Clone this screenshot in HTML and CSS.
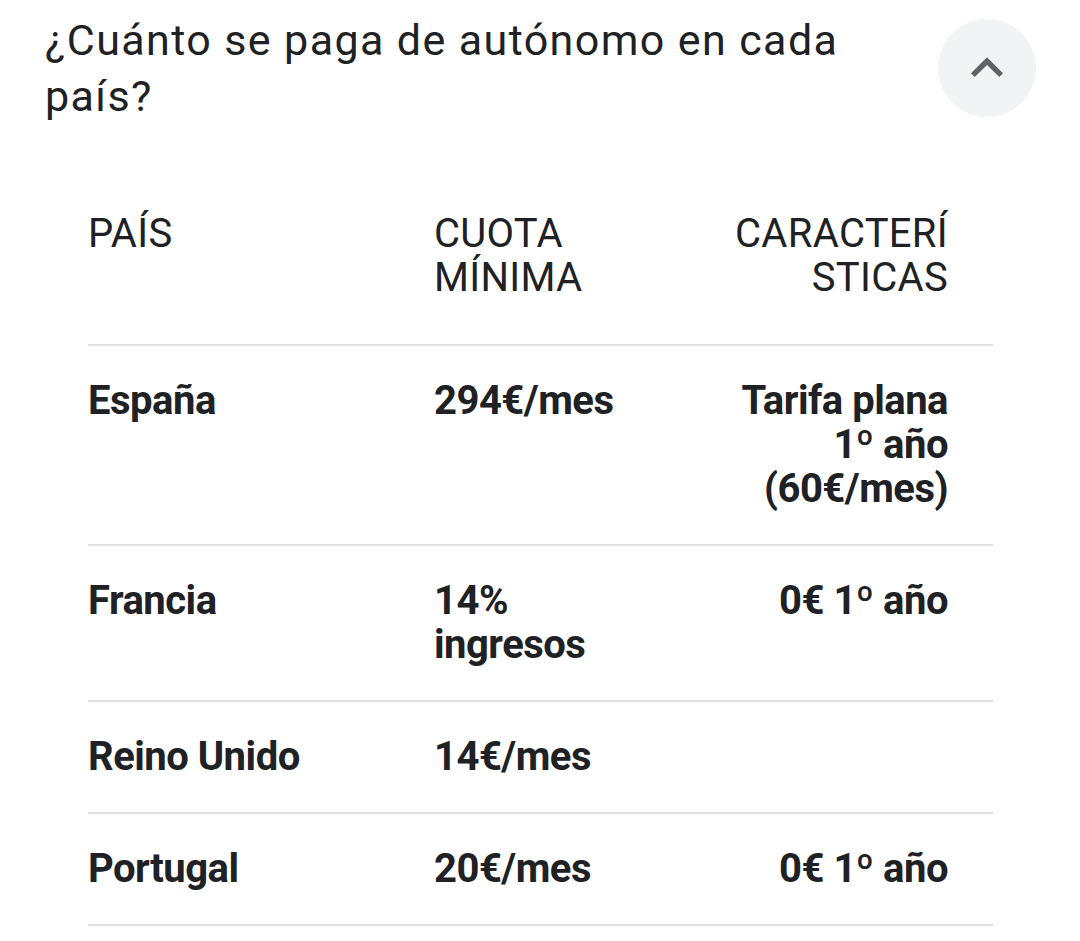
FILE: index.html
```html
<!DOCTYPE html>
<html lang="es">
<head>
    <meta charset="UTF-8">
    <meta name="viewport" content="width=device-width, initial-scale=1.0">
    <title>¿Cuánto se paga de autónomo en cada país?</title>
    <link rel="stylesheet" href="styles.css">
</head>
<body>
    <div class="faq">
        <div class="faq-head">
            <h2 class="faq-title">¿Cuánto se paga de autónomo en cada país?</h2>
            <button class="toggle-btn" aria-label="Cerrar">
                <svg width="64" height="64" viewBox="0 0 24 24">
                    <path d="M7.41 15.41 12 10.83l4.59 4.58L18 14l-6-6-6 6z" fill="#5f6368"/>
                </svg>
            </button>
        </div>
        <table class="cuotas">
            <thead>
                <tr>
                    <th>País</th>
                    <th>Cuota mínima</th>
                    <th class="right">Características</th>
                </tr>
            </thead>
            <tbody>
                <tr>
                    <td>España</td>
                    <td>294€/mes</td>
                    <td class="right">Tarifa plana 1º año (60€/mes)</td>
                </tr>
                <tr>
                    <td>Francia</td>
                    <td>14% ingresos</td>
                    <td class="right">0€ 1º año</td>
                </tr>
                <tr>
                    <td>Reino Unido</td>
                    <td>14€/mes</td>
                    <td class="right"></td>
                </tr>
                <tr>
                    <td>Portugal</td>
                    <td>20€/mes</td>
                    <td class="right">0€ 1º año</td>
                </tr>
            </tbody>
        </table>
    </div>
</body>
</html>
```

FILE: styles.css
```css
body {
    font-family: Roboto, "Open Sans", sans-serif;
    background-color: #fff;
    color: #202124;
    margin: 0;
}
.faq {
    padding: 0 45px 0 45px;
}
.faq-head {
    display: flex;
    justify-content: space-between;
    align-items: flex-start;
    gap: 60px;
}
.faq-title {
    margin: 12px 0 0 0;
    font-size: 43px;
    font-weight: 400;
    line-height: 56px;
    letter-spacing: 1.4px;
}
.toggle-btn {
    flex: none;
    width: 98px;
    height: 98px;
    margin-top: 19px;
    margin-right: -1px;
    border: none;
    border-radius: 50%;
    background-color: #f1f3f4;
    display: flex;
    align-items: center;
    justify-content: center;
    padding: 0;
}
.cuotas {
    width: 905px;
    margin: 88px 0 0 43px;
    border-collapse: collapse;
    table-layout: fixed;
    font-size: 40px;
    line-height: 44px;
}
.cuotas th,
.cuotas td {
    text-align: left;
    vertical-align: top;
    padding: 33px 45px 33px 0;
    overflow-wrap: anywhere;
}
.cuotas th:nth-child(1), .cuotas td:nth-child(1) { width: 301px; }
.cuotas th:nth-child(2), .cuotas td:nth-child(2) { width: 208px; }
.cuotas th:nth-child(3), .cuotas td:nth-child(3) { width: 216px; padding-left: 45px; }
.cuotas th {
    font-weight: 400;
    text-transform: uppercase;
    letter-spacing: 0.3px;
    padding-top: 0;
    padding-bottom: 44px;
}
.cuotas td {
    font-weight: 700;
    letter-spacing: -0.5px;
}
.cuotas tr {
    border-bottom: 2px solid #e0e0e0;
}
.cuotas .right {
    text-align: right;
}
```
